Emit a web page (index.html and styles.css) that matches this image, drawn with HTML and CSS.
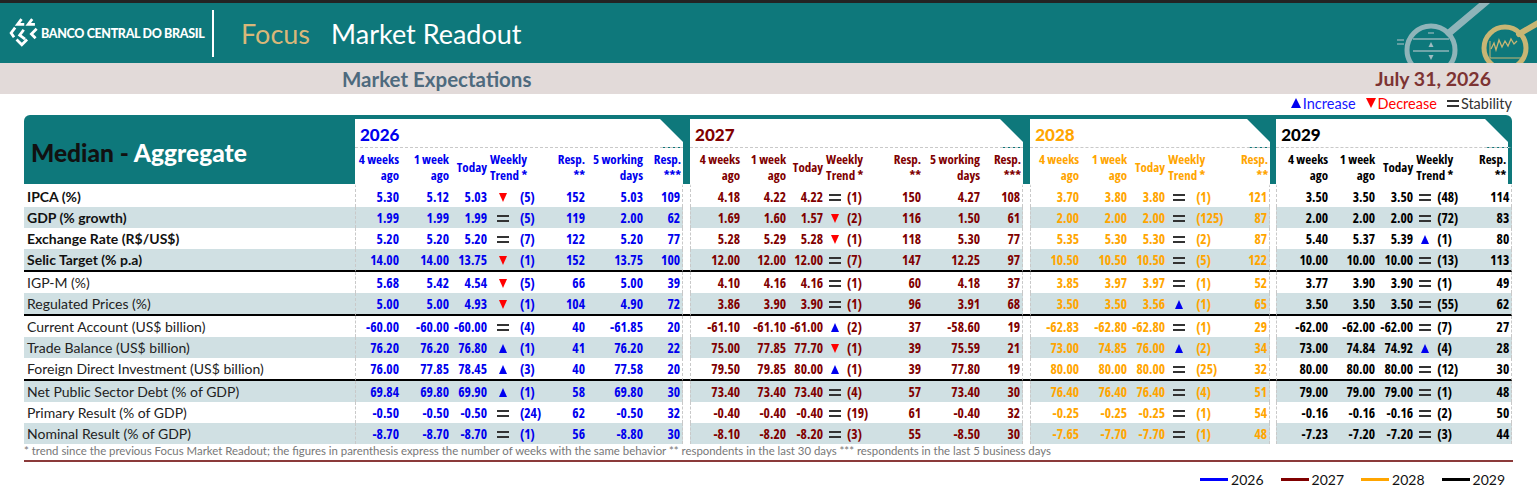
FILE: index.html
```html
<!DOCTYPE html>
<html lang="en">
<head>
<meta charset="utf-8">
<title>Focus Market Readout</title>
<link rel="stylesheet" href="styles.css">
</head>
<body>
<div class="topstrip"></div>
<header class="hdr">
  <div class="brand">
    <svg class="bcb-icon" viewBox="0 0 30 28" aria-hidden="true">
      <g fill="none" stroke="#fff" stroke-width="2.6" stroke-linecap="square" stroke-linejoin="miter">
        <path d="M11 2 L8 6 L13 6"/>
        <path d="M21 2 L18 6 L23 6"/>
        <path d="M5 10 L2 14 L4 17"/>
        <path d="M13 12 L10 16 L14 19"/>
        <path d="M25 11 L21 15 L24 18"/>
        <path d="M8 21 L12 25 L16 21"/>
      </g>
    </svg>
    <span class="bcb-text">BANCO CENTRAL DO BRASIL</span>
  </div>
  <div class="vline"></div>
  <h1 class="title"><span class="focus">Focus</span><span class="readout">Market Readout</span></h1>
  <svg class="deco" viewBox="0 0 160 60" aria-hidden="true">
    <g fill="none" stroke="#9ebbc0" opacity="0.9">
      <line x1="72" y1="30" x2="110" y2="-2" stroke-width="7" stroke-linecap="round"/>
      <circle cx="54" cy="47" r="24" stroke-width="5"/>
      <line x1="36" y1="36" x2="72" y2="36" stroke-width="1.3"/>
      <line x1="36" y1="48" x2="72" y2="48" stroke-width="1.3"/>
      <line x1="20" y1="37" x2="27" y2="37" stroke-width="1.3"/>
      <line x1="20" y1="41" x2="27" y2="41" stroke-width="1.3"/>
      <line x1="51" y1="30" x2="57" y2="30" stroke-width="1.3"/>
    </g>
    <path d="M54 39 L51.5 44 L56.5 44 Z" fill="#9ebbc0"/>
    <path d="M54 57 L51.5 52 L56.5 52 Z" fill="#9ebbc0"/>
    <g fill="none" stroke="#c8b674">
      <line x1="142" y1="31" x2="168" y2="16" stroke-width="6" stroke-linecap="round"/>
      <circle cx="128" cy="45" r="21" stroke-width="5"/>
      <path d="M113 38 L113 55 L144 55" stroke-width="1"/>
      <path d="M114 46 L117 40 L119 47 L122 37 L125 44 L128 38 L131 43 L134 36 L137 41 L140 38" stroke-width="1.3"/>
    </g>
  </svg>
</header>
<div class="subbar">
  <span class="sub-title">Market Expectations</span>
  <span class="date">July 31, 2026</span>
</div>
<div class="legend">
  <span class="lg lg-up"><i class="up"></i>Increase</span>
  <span class="lg lg-dn"><i class="dn"></i>Decrease</span>
  <span class="lg lg-eq"><i class="eq"></i>Stability</span>
</div>
<table class="grid">
  <colgroup>
    <col class="w331">
    <col class="w46"><col class="w50"><col class="w38"><col class="w27"><col class="w24"><col class="w47"><col class="w58"><col class="w38">
    <col class="w7">
    <col class="w52"><col class="w46"><col class="w37"><col class="w20"><col class="w33"><col class="w45"><col class="w59"><col class="w41">
    <col class="w7">
    <col class="w51"><col class="w48"><col class="w38"><col class="w23"><col class="w40"><col class="w40">
    <col class="w6">
    <col class="w54"><col class="w47"><col class="w38"><col class="w20"><col class="w35"><col class="w42">
  </colgroup>
  <thead>
    <tr class="yrow">
      <th class="corner" rowspan="2">Median - <span class="agg">Aggregate</span></th>
      <th class="yr y6" colspan="8">2026</th>
      <th class="tgap" rowspan="2"></th>
      <th class="yr y7" colspan="8">2027</th>
      <th class="tgap" rowspan="2"></th>
      <th class="yr y8" colspan="6">2028</th>
      <th class="tgap" rowspan="2"></th>
      <th class="yr y9 last" colspan="6">2029</th>
    </tr>
    <tr class="hrow">
      <th class="h y6">4 weeks<br>ago</th><th class="h y6">1 week<br>ago</th><th class="h y6">Today</th><th class="h hl y6" colspan="2">Weekly<br>Trend *</th><th class="h y6">Resp.<br>**</th><th class="h y6">5 working<br>days</th><th class="h y6">Resp.<br>***</th>
      <th class="h y7">4 weeks<br>ago</th><th class="h y7">1 week<br>ago</th><th class="h y7">Today</th><th class="h hl y7" colspan="2">Weekly<br>Trend *</th><th class="h y7">Resp.<br>**</th><th class="h y7">5 working<br>days</th><th class="h y7">Resp.<br>***</th>
      <th class="h y8">4 weeks<br>ago</th><th class="h y8">1 week<br>ago</th><th class="h y8">Today</th><th class="h hl y8" colspan="2">Weekly<br>Trend *</th><th class="h y8">Resp.<br>**</th>
      <th class="h y9">4 weeks<br>ago</th><th class="h y9">1 week<br>ago</th><th class="h y9">Today</th><th class="h hl y9" colspan="2">Weekly<br>Trend *</th><th class="h y9 last">Resp.<br>**</th>
    </tr>
  </thead>
  <tbody>
    <tr class="bold">
      <td>IPCA (%)</td>
      <td>5.30</td><td>5.12</td><td>5.03</td><td><i class="dn"></i></td><td>(5)</td><td>152</td><td>5.03</td><td>109</td><td></td>
      <td>4.18</td><td>4.22</td><td>4.22</td><td><i class="eq"></i></td><td>(1)</td><td>150</td><td>4.27</td><td>108</td><td></td>
      <td>3.70</td><td>3.80</td><td>3.80</td><td><i class="eq"></i></td><td>(1)</td><td>121</td><td></td>
      <td>3.50</td><td>3.50</td><td>3.50</td><td><i class="eq"></i></td><td>(48)</td><td>114</td>
    </tr>
    <tr class="bold">
      <td>GDP (% growth)</td>
      <td>1.99</td><td>1.99</td><td>1.99</td><td><i class="eq"></i></td><td>(5)</td><td>119</td><td>2.00</td><td>62</td><td></td>
      <td>1.69</td><td>1.60</td><td>1.57</td><td><i class="dn"></i></td><td>(2)</td><td>116</td><td>1.50</td><td>61</td><td></td>
      <td>2.00</td><td>2.00</td><td>2.00</td><td><i class="eq"></i></td><td>(125)</td><td>87</td><td></td>
      <td>2.00</td><td>2.00</td><td>2.00</td><td><i class="eq"></i></td><td>(72)</td><td>83</td>
    </tr>
    <tr class="bold">
      <td>Exchange Rate (R$/US$)</td>
      <td>5.20</td><td>5.20</td><td>5.20</td><td><i class="eq"></i></td><td>(7)</td><td>122</td><td>5.20</td><td>77</td><td></td>
      <td>5.28</td><td>5.29</td><td>5.28</td><td><i class="dn"></i></td><td>(1)</td><td>118</td><td>5.30</td><td>77</td><td></td>
      <td>5.35</td><td>5.30</td><td>5.30</td><td><i class="eq"></i></td><td>(2)</td><td>87</td><td></td>
      <td>5.40</td><td>5.37</td><td>5.39</td><td><i class="up"></i></td><td>(1)</td><td>80</td>
    </tr>
    <tr class="bold sep">
      <td>Selic Target (% p.a)</td>
      <td>14.00</td><td>14.00</td><td>13.75</td><td><i class="dn"></i></td><td>(1)</td><td>152</td><td>13.75</td><td>100</td><td></td>
      <td>12.00</td><td>12.00</td><td>12.00</td><td><i class="eq"></i></td><td>(7)</td><td>147</td><td>12.25</td><td>97</td><td></td>
      <td>10.50</td><td>10.50</td><td>10.50</td><td><i class="eq"></i></td><td>(5)</td><td>122</td><td></td>
      <td>10.00</td><td>10.00</td><td>10.00</td><td><i class="eq"></i></td><td>(13)</td><td>113</td>
    </tr>
    <tr>
      <td>IGP-M (%)</td>
      <td>5.68</td><td>5.42</td><td>4.54</td><td><i class="dn"></i></td><td>(5)</td><td>66</td><td>5.00</td><td>39</td><td></td>
      <td>4.10</td><td>4.16</td><td>4.16</td><td><i class="eq"></i></td><td>(1)</td><td>60</td><td>4.18</td><td>37</td><td></td>
      <td>3.85</td><td>3.97</td><td>3.97</td><td><i class="eq"></i></td><td>(1)</td><td>52</td><td></td>
      <td>3.77</td><td>3.90</td><td>3.90</td><td><i class="eq"></i></td><td>(1)</td><td>49</td>
    </tr>
    <tr class="sep">
      <td>Regulated Prices (%)</td>
      <td>5.00</td><td>5.00</td><td>4.93</td><td><i class="dn"></i></td><td>(1)</td><td>104</td><td>4.90</td><td>72</td><td></td>
      <td>3.86</td><td>3.90</td><td>3.90</td><td><i class="eq"></i></td><td>(1)</td><td>96</td><td>3.91</td><td>68</td><td></td>
      <td>3.50</td><td>3.50</td><td>3.56</td><td><i class="up"></i></td><td>(1)</td><td>65</td><td></td>
      <td>3.50</td><td>3.50</td><td>3.50</td><td><i class="eq"></i></td><td>(55)</td><td>62</td>
    </tr>
    <tr>
      <td>Current Account (US$ billion)</td>
      <td>-60.00</td><td>-60.00</td><td>-60.00</td><td><i class="eq"></i></td><td>(4)</td><td>40</td><td>-61.85</td><td>20</td><td></td>
      <td>-61.10</td><td>-61.10</td><td>-61.00</td><td><i class="up"></i></td><td>(2)</td><td>37</td><td>-58.60</td><td>19</td><td></td>
      <td>-62.83</td><td>-62.80</td><td>-62.80</td><td><i class="eq"></i></td><td>(1)</td><td>29</td><td></td>
      <td>-62.00</td><td>-62.00</td><td>-62.00</td><td><i class="eq"></i></td><td>(7)</td><td>27</td>
    </tr>
    <tr>
      <td>Trade Balance (US$ billion)</td>
      <td>76.20</td><td>76.20</td><td>76.80</td><td><i class="up"></i></td><td>(1)</td><td>41</td><td>76.20</td><td>22</td><td></td>
      <td>75.00</td><td>77.85</td><td>77.70</td><td><i class="dn"></i></td><td>(1)</td><td>39</td><td>75.59</td><td>21</td><td></td>
      <td>73.00</td><td>74.85</td><td>76.00</td><td><i class="up"></i></td><td>(2)</td><td>34</td><td></td>
      <td>73.00</td><td>74.84</td><td>74.92</td><td><i class="up"></i></td><td>(4)</td><td>28</td>
    </tr>
    <tr class="sep">
      <td>Foreign Direct Investment (US$ billion)</td>
      <td>76.00</td><td>77.85</td><td>78.45</td><td><i class="up"></i></td><td>(3)</td><td>40</td><td>77.58</td><td>20</td><td></td>
      <td>79.50</td><td>79.85</td><td>80.00</td><td><i class="up"></i></td><td>(1)</td><td>39</td><td>77.80</td><td>19</td><td></td>
      <td>80.00</td><td>80.00</td><td>80.00</td><td><i class="eq"></i></td><td>(25)</td><td>32</td><td></td>
      <td>80.00</td><td>80.00</td><td>80.00</td><td><i class="eq"></i></td><td>(12)</td><td>30</td>
    </tr>
    <tr>
      <td>Net Public Sector Debt (% of GDP)</td>
      <td>69.84</td><td>69.80</td><td>69.90</td><td><i class="up"></i></td><td>(1)</td><td>58</td><td>69.80</td><td>30</td><td></td>
      <td>73.40</td><td>73.40</td><td>73.40</td><td><i class="eq"></i></td><td>(4)</td><td>57</td><td>73.40</td><td>30</td><td></td>
      <td>76.40</td><td>76.40</td><td>76.40</td><td><i class="eq"></i></td><td>(4)</td><td>51</td><td></td>
      <td>79.00</td><td>79.00</td><td>79.00</td><td><i class="eq"></i></td><td>(1)</td><td>48</td>
    </tr>
    <tr>
      <td>Primary Result (% of GDP)</td>
      <td>-0.50</td><td>-0.50</td><td>-0.50</td><td><i class="eq"></i></td><td>(24)</td><td>62</td><td>-0.50</td><td>32</td><td></td>
      <td>-0.40</td><td>-0.40</td><td>-0.40</td><td><i class="eq"></i></td><td>(19)</td><td>61</td><td>-0.40</td><td>32</td><td></td>
      <td>-0.25</td><td>-0.25</td><td>-0.25</td><td><i class="eq"></i></td><td>(1)</td><td>54</td><td></td>
      <td>-0.16</td><td>-0.16</td><td>-0.16</td><td><i class="eq"></i></td><td>(2)</td><td>50</td>
    </tr>
    <tr>
      <td>Nominal Result (% of GDP)</td>
      <td>-8.70</td><td>-8.70</td><td>-8.70</td><td><i class="eq"></i></td><td>(1)</td><td>56</td><td>-8.80</td><td>30</td><td></td>
      <td>-8.10</td><td>-8.20</td><td>-8.20</td><td><i class="eq"></i></td><td>(3)</td><td>55</td><td>-8.50</td><td>30</td><td></td>
      <td>-7.65</td><td>-7.70</td><td>-7.70</td><td><i class="eq"></i></td><td>(1)</td><td>48</td><td></td>
      <td>-7.23</td><td>-7.20</td><td>-7.20</td><td><i class="eq"></i></td><td>(3)</td><td>44</td>
    </tr>
  </tbody>
</table>
<p class="note">* trend since the previous Focus Market Readout; the figures in parenthesis express the number of weeks with the same behavior ** respondents in the last 30 days *** respondents in the last 5 business days</p>
<div class="redline"></div>
<div class="years">
  <span class="yl"><i class="bar b26"></i>2026</span>
  <span class="yl"><i class="bar b27"></i>2027</span>
  <span class="yl"><i class="bar b28"></i>2028</span>
  <span class="yl"><i class="bar b29"></i>2029</span>
</div>
</body>
</html>
```
FILE: styles.css
```css
* { box-sizing: border-box; }
html, body { margin: 0; padding: 0; background: #fff; }
body {
  width: 1537px;
  font-family: "Lato", "Liberation Sans", sans-serif;
  color: #222;
}
th, td { padding: 0; }

/* ---------- header ---------- */
.topstrip { height: 3px; background: #232323; }
.hdr {
  position: relative;
  height: 60px;
  background: #0e787b;
  display: flex;
  align-items: center;
  overflow: hidden;
}
.brand { display: flex; align-items: center; width: 212px; padding-left: 9px; }
.bcb-icon { width: 32px; height: 30px; flex: none; }
.bcb-text {
  color: #fff;
  font-weight: 900;
  font-size: 12.5px;
  letter-spacing: -0.35px;
  white-space: nowrap;
}
.vline { width: 2px; height: 47px; background: #fff; flex: none; }
.title { margin: 0 0 0 27px; font-weight: 400; font-size: 27px; display: flex; gap: 21px; }
.focus { color: #d9b779; }
.readout { color: #fff; }
.deco { position: absolute; right: 0; top: 0; width: 160px; height: 60px; }

.subbar {
  height: 31px;
  background: #e2dad9;
  display: flex;
  align-items: center;
  padding: 0 46px 0 342px;
}
.sub-title { font-size: 20.5px; font-weight: 700; color: #4e6a7e; }
.date { margin-left: auto; font-size: 19.5px; font-weight: 700; color: #7d3333; }

.legend {
  height: 18px;
  display: flex;
  justify-content: flex-end;
  align-items: center;
  gap: 10px;
  padding-right: 25px;
  font-size: 14.5px;
}
.lg { display: flex; align-items: center; }
.lg i { margin-right: 2px; }
.lg .up { border-left-width: 5px; border-right-width: 5px; border-bottom-width: 10px; }
.lg .dn { border-left-width: 5px; border-right-width: 5px; border-top-width: 10px; }
.lg-up { color: #1515ff; }
.lg-dn { color: #f00; }
.lg-eq { color: #333; }

/* ---------- trend symbols ---------- */
.up, .dn, .eq { display: inline-block; vertical-align: middle; }
.up {
  width: 0; height: 0;
  border-left: 4.5px solid transparent;
  border-right: 4.5px solid transparent;
  border-bottom: 9px solid #0000f0;
}
.dn {
  width: 0; height: 0;
  border-left: 4.5px solid transparent;
  border-right: 4.5px solid transparent;
  border-top: 9px solid #f00;
}
.eq {
  width: 12px; height: 7px;
  border-top: 2.5px solid #333;
  border-bottom: 2.5px solid #333;
}

/* ---------- table ---------- */
.grid {
  margin: 3px 0 0 24px;
  width: 1488px;
  table-layout: fixed;
  border-collapse: separate;
  border-spacing: 0;
}
.w331 { width: 331px; } .w46 { width: 46px; } .w50 { width: 50px; } .w38 { width: 38px; }
.w27 { width: 27px; } .w24 { width: 24px; } .w47 { width: 47px; } .w58 { width: 58px; }
.w7 { width: 7px; } .w6 { width: 6px; } .w52 { width: 52px; }
.w37 { width: 37px; } .w20 { width: 20px; } .w33 { width: 33px; } .w45 { width: 45px; }
.w59 { width: 59px; } .w41 { width: 41px; } .w51 { width: 51px; } .w48 { width: 48px; }
.w23 { width: 23px; } .w40 { width: 40px; } .w54 { width: 54px; } .w35 { width: 35px; }
.w42 { width: 42px; }

.corner {
  background: #0e787b;
  border-top-left-radius: 6px;
  text-align: left;
  vertical-align: middle;
  padding: 6px 0 0 7px;
  font-size: 24.5px;
  font-weight: 900;
  color: #111;
  white-space: nowrap;
}
.corner .agg { color: #fff; }
.tgap { background: #0e787b; }

.yr {
  height: 33px;
  background: linear-gradient(225deg, #0e787b 16px, #fff 16.5px);
  border-top: 4px solid #0e787b;
  border-bottom: 1px dashed #c9c9c9;
  text-align: left;
  padding: 2px 0 0 5px;
  font-size: 17px;
  font-weight: 900;
  vertical-align: middle;
}
.yr.last { border-right: 4px solid #0e787b; border-top-right-radius: 6px; }

.h {
  height: 36px;
  background: #fff;
  font-family: "Open Sans", "DejaVu Sans", sans-serif;
  font-stretch: 75%;
  font-size: 13px;
  font-weight: 700;
  line-height: 16px;
  text-align: right;
  vertical-align: middle;
  padding: 2px 2px 0 0;
  white-space: nowrap;
}
.h.hl { text-align: left; padding: 2px 0 0 1px; }
.h.last { border-right: 4px solid #0e787b; }

.y6 { color: #0000ee; }
.y7 { color: #800000; }
.y8 { color: #ffa500; }
.y9 { color: #000; }

.grid tbody td {
  height: 21px;
  font-family: "Open Sans", "DejaVu Sans", sans-serif;
  font-stretch: 75%;
  font-weight: 700;
  font-size: 13.5px;
  line-height: 16px;
  text-align: right;
  padding-right: 2px;
  white-space: nowrap;
  vertical-align: middle;
}
.grid tbody tr:first-child td { border-top: 2px solid #fff; height: 23px; }
.grid tbody td:first-child {
  font-family: "Lato", "Liberation Sans", sans-serif;
  font-stretch: normal;
  font-weight: 400;
  font-size: 14px;
  text-align: left;
  padding-left: 3px;
  color: #222;
}
.grid tbody tr.bold td:first-child { font-weight: 700; font-size: 14px; color: #111; }
.grid tbody tr:nth-child(even) td { background: #d0e0e3; }
.grid tbody tr:nth-child(even) td:nth-child(10),
.grid tbody tr:nth-child(even) td:nth-child(19),
.grid tbody tr:nth-child(even) td:nth-child(26) { background: #fff; }
.grid tbody tr.sep td { border-bottom: 2px solid #000; height: 23px; }

/* group colours */
.grid tbody td:nth-child(n+2):nth-child(-n+9) { color: #0000ee; }
.grid tbody td:nth-child(n+11):nth-child(-n+18) { color: #800000; }
.grid tbody td:nth-child(n+20):nth-child(-n+25) { color: #ffa500; }
.grid tbody td:nth-child(n+27) { color: #000; }

/* trend symbol + count columns */
.grid tbody td:nth-child(5),
.grid tbody td:nth-child(14),
.grid tbody td:nth-child(23),
.grid tbody td:nth-child(30) { text-align: center; padding: 0; }
.grid tbody td:nth-child(6),
.grid tbody td:nth-child(15),
.grid tbody td:nth-child(24),
.grid tbody td:nth-child(31) { text-align: left; padding: 0 0 0 2px; }
.grid tbody td:nth-child(6) { padding-left: 4px; }
.grid tbody td:nth-child(24) { padding-left: 6px; }

/* dashed group edges */
.grid tbody td:nth-child(2),
.grid tbody td:nth-child(11),
.grid tbody td:nth-child(20),
.grid tbody td:nth-child(27) { border-left: 1px dashed #c9c9c9; }
.grid tbody td:nth-child(9),
.grid tbody td:nth-child(18),
.grid tbody td:nth-child(25),
.grid tbody td:nth-child(32) { border-right: 1px dashed #c9c9c9; }

/* ---------- footer ---------- */
.note {
  margin: 0 0 0 24px;
  font-size: 11.4px;
  line-height: 13px;
  color: #777;
  white-space: nowrap;
}
.redline { margin: 3px 0 0 24px; width: 1489px; height: 2px; background: #8b3a3a; }
.years {
  display: flex;
  justify-content: flex-end;
  gap: 17px;
  padding: 9px 32px 0 0;
  font-size: 14px;
  color: #111;
}
.yl { display: flex; align-items: center; }
.bar { display: inline-block; width: 28px; height: 3px; margin-right: 3px; }
.b26 { background: #0000ff; }
.b27 { background: #800000; }
.b28 { background: #ffa500; }
.b29 { background: #000; }
```
